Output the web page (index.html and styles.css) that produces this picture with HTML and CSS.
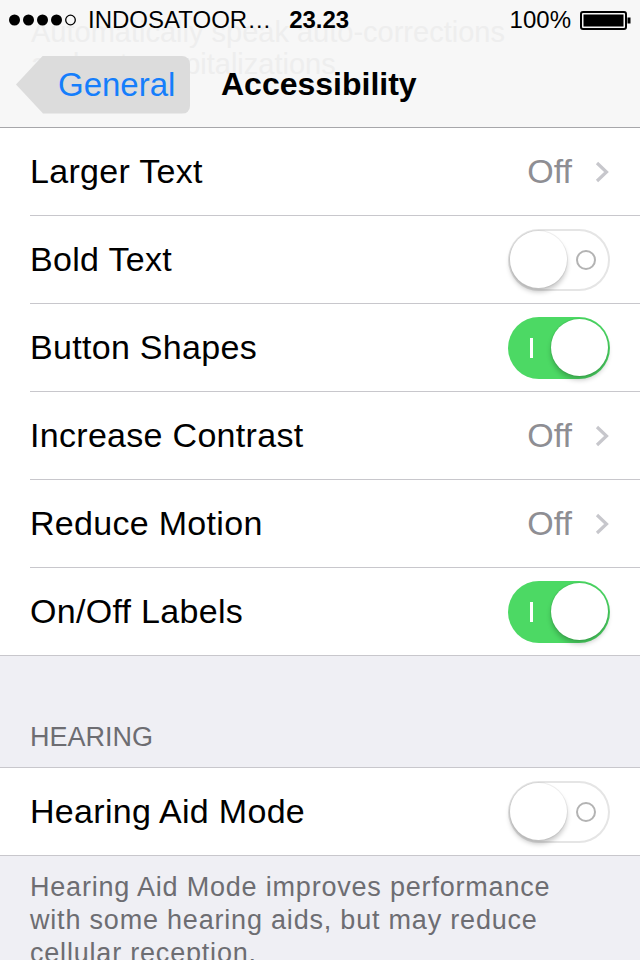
FILE: index.html
```html
<!DOCTYPE html>
<html>
<head>
<meta charset="utf-8">
<link rel="stylesheet" href="styles.css">
</head>
<body>
<header class="header">
  <div class="ghost">Automatically speak auto-corrections<br>and auto-capitalizations</div>
  <div class="statusbar">
    <svg class="signal" width="72" height="14" viewBox="0 0 72 14">
      <circle cx="6.5" cy="7" r="5.5" fill="#000"/>
      <circle cx="20.5" cy="7" r="5.5" fill="#000"/>
      <circle cx="34.5" cy="7" r="5.5" fill="#000"/>
      <circle cx="48.5" cy="7" r="5.5" fill="#000"/>
      <circle cx="62.5" cy="7" r="4.8" fill="none" stroke="#000" stroke-width="1.3"/>
    </svg>
    <span class="carrier">INDOSATOOR…</span>
    <span class="time">23.23</span>
    <span class="battery-pct">100%</span>
    <svg class="battery" width="52" height="19" viewBox="0 0 52 19">
      <rect x="1" y="1" width="45" height="17" rx="2" fill="none" stroke="#000" stroke-width="2"/>
      <rect x="3.5" y="3.5" width="40" height="12" fill="#000"/>
      <rect x="47.5" y="6.5" width="3" height="6" fill="#000"/>
    </svg>
  </div>
  <nav class="navbar">
    <a class="back">General</a>
    <span class="title">Accessibility</span>
  </nav>
</header>

<section class="group">
  <div class="row">
    <span class="label">Larger Text</span>
    <span class="value">Off</span>
    <svg class="chevron" width="16" height="24" viewBox="0 0 16 24"><path d="M3 3 L12.5 12 L3 21" fill="none" stroke="#c7c7cc" stroke-width="3.2"/></svg>
  </div>
  <div class="row">
    <span class="label">Bold Text</span>
    <span class="switch off"><span class="knob"></span><span class="ring"></span></span>
  </div>
  <div class="row">
    <span class="label">Button Shapes</span>
    <span class="switch on"><span class="bar"></span><span class="knob"></span></span>
  </div>
  <div class="row">
    <span class="label">Increase Contrast</span>
    <span class="value">Off</span>
    <svg class="chevron" width="16" height="24" viewBox="0 0 16 24"><path d="M3 3 L12.5 12 L3 21" fill="none" stroke="#c7c7cc" stroke-width="3.2"/></svg>
  </div>
  <div class="row">
    <span class="label">Reduce Motion</span>
    <span class="value">Off</span>
    <svg class="chevron" width="16" height="24" viewBox="0 0 16 24"><path d="M3 3 L12.5 12 L3 21" fill="none" stroke="#c7c7cc" stroke-width="3.2"/></svg>
  </div>
  <div class="row">
    <span class="label">On/Off Labels</span>
    <span class="switch on"><span class="bar"></span><span class="knob"></span></span>
  </div>
</section>

<div class="section-header">HEARING</div>

<section class="group bordered">
  <div class="row">
    <span class="label">Hearing Aid Mode</span>
    <span class="switch off"><span class="knob"></span><span class="ring"></span></span>
  </div>
</section>

<p class="footer">Hearing Aid Mode improves performance with some hearing aids, but may reduce cellular reception.</p>
</body>
</html>
```

FILE: styles.css
```css
* { box-sizing: border-box; }

html, body {
  margin: 0;
  padding: 0;
}

body {
  width: 640px;
  height: 960px;
  overflow: hidden;
  background: #efeff4;
  font-family: "Liberation Sans", Arial, sans-serif;
  color: #000;
}

.header {
  position: relative;
  background: #f7f7f7;
  border-bottom: 1px solid #a7a7aa;
}

.ghost {
  position: absolute;
  left: 31px;
  top: 16px;
  font-size: 29px;
  line-height: 32px;
  color: #eeeeee;
  white-space: nowrap;
}

.statusbar {
  position: relative;
  height: 40px;
  display: flex;
  align-items: center;
  padding: 0 8px 0 8px;
  font-size: 24px;
}

.signal {
  flex: none;
}

.carrier {
  margin-left: 8px;
}

.time {
  margin-left: 18px;
  font-weight: bold;
}

.battery-pct {
  margin-left: auto;
}

.battery {
  margin-left: 9px;
}

.navbar {
  position: relative;
  height: 87px;
  display: flex;
  align-items: center;
  padding-left: 16px;
}

.back {
  display: flex;
  align-items: center;
  width: 174px;
  height: 58px;
  padding-left: 42px;
  background: #dcdcdc;
  border-radius: 0 8px 8px 0;
  clip-path: polygon(27px 0, 100% 0, 100% 100%, 27px 100%, 0 50%);
  color: #157efb;
  font-size: 33px;
  margin-top: 2px;
}

.title {
  margin-left: 31px;
  font-size: 32px;
  font-weight: bold;
  margin-top: 2px;
}

.group {
  background: #fff;
}

.group.bordered {
  border-top: 1px solid #c8c7cc;
}

.row {
  height: 88px;
  margin-left: 30px;
  padding-right: 30px;
  border-bottom: 1px solid #c8c7cc;
  display: flex;
  align-items: center;
}

.row:last-child {
  margin-left: 0;
  padding-left: 30px;
}

.label {
  font-size: 34px;
  letter-spacing: 0.3px;
  flex: 1;
}

.value {
  font-size: 34px;
  color: #8e8e93;
}

.chevron {
  margin-left: 22px;
}

.switch {
  width: 102px;
  height: 62px;
  border-radius: 31px;
  display: flex;
  align-items: center;
  padding: 2px;
  flex: none;
}

.switch.off {
  background: #fff;
  box-shadow: inset 0 0 0 2px #e5e5e5;
}

.switch.on {
  background: #4cd964;
}

.knob {
  width: 57px;
  height: 57px;
  border-radius: 50%;
  background: #fff;
  box-shadow: 0 4px 5px rgba(0, 0, 0, 0.22), 0 0 0 1px rgba(0, 0, 0, 0.06);
}

.switch.on .knob {
  margin-left: auto;
}

.ring {
  margin-left: auto;
  margin-right: 12px;
  width: 20px;
  height: 20px;
  border-radius: 50%;
  border: 2.5px solid #b3b3b3;
}

.bar {
  margin-left: 20px;
  width: 3px;
  height: 20px;
  background: #fff;
}

.section-header {
  height: 111px;
  display: flex;
  align-items: flex-end;
  padding: 0 30px 14px 30px;
  font-size: 27px;
  line-height: 32px;
  color: #6d6d72;
}

.footer {
  margin: 0;
  padding: 15px 60px 16px 30px;
  font-size: 27px;
  letter-spacing: 0.8px;
  line-height: 33px;
  color: #6d6d72;
}
```
